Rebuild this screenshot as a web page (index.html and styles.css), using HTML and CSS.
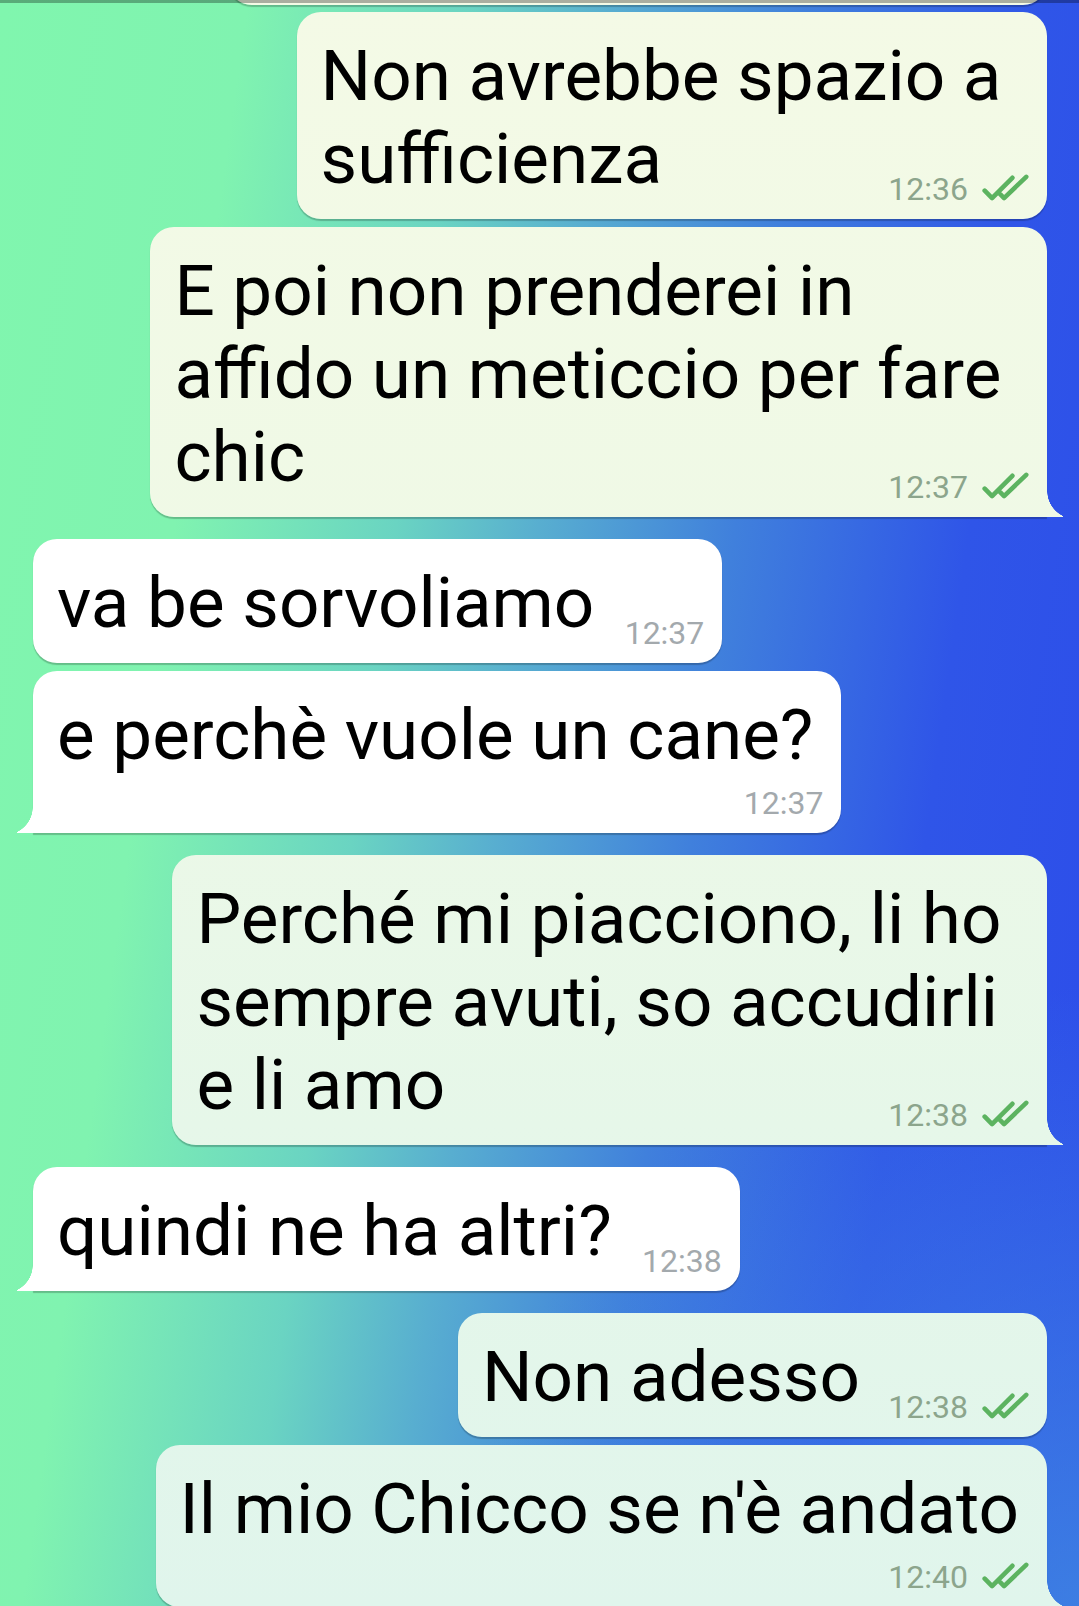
FILE: index.html
```html
<!DOCTYPE html>
<html lang="it">
<head>
    <meta charset="UTF-8">
    <meta name="viewport" content="width=device-width, initial-scale=1.0">
    <title>Chat</title>
    <link rel="stylesheet" href="styles.css">
</head>
<body>
    <div class="chat">
        <!-- bottom of the previous message, cut off by the toolbar -->
        <div class="bubble out cut"></div>

        <!-- sent -->
        <div class="group sent first">
            <div class="bubble out">
                <p class="text"><span>Non avrebbe spazio a&nbsp;<br>sufficienza</span><i class="spacer"></i></p>
                <div class="meta"><span class="time">12:36</span><svg class="ticks" viewBox="0 0 52 30"><path d="M4 19l8 8L34 5M21 23l4 4L49 4"/></svg></div>
            </div>
            <div class="bubble out tail">
                <p class="text"><span>E poi non prenderei in&nbsp;<br>affido un meticcio per fare&nbsp;<br>chic</span><i class="spacer"></i></p>
                <div class="meta"><span class="time">12:37</span><svg class="ticks" viewBox="0 0 52 30"><path d="M4 19l8 8L34 5M21 23l4 4L49 4"/></svg></div>
            </div>
        </div>

        <!-- received -->
        <div class="group recv">
            <div class="bubble in">
                <p class="text"><span>va be sorvoliamo</span><i class="spacer"></i></p>
                <div class="meta"><span class="time">12:37</span></div>
            </div>
            <div class="bubble in tail stacked">
                <p class="text"><span>e perchè vuole un cane?</span><i class="spacer"></i></p>
                <div class="meta"><span class="time">12:37</span></div>
            </div>
        </div>

        <div class="group sent">
            <div class="bubble out tail">
                <p class="text"><span>Perché mi piacciono, li ho&nbsp;<br>sempre avuti, so accudirli&nbsp;<br>e li amo</span><i class="spacer"></i></p>
                <div class="meta"><span class="time">12:38</span><svg class="ticks" viewBox="0 0 52 30"><path d="M4 19l8 8L34 5M21 23l4 4L49 4"/></svg></div>
            </div>
        </div>

        <div class="group recv">
            <div class="bubble in tail">
                <p class="text"><span>quindi ne ha altri?</span><i class="spacer"></i></p>
                <div class="meta"><span class="time">12:38</span></div>
            </div>
        </div>

        <div class="group sent">
            <div class="bubble out">
                <p class="text"><span>Non adesso</span><i class="spacer"></i></p>
                <div class="meta"><span class="time">12:38</span><svg class="ticks" viewBox="0 0 52 30"><path d="M4 19l8 8L34 5M21 23l4 4L49 4"/></svg></div>
            </div>
            <div class="bubble out tail stacked">
                <p class="text"><span>Il mio Chicco se n'è andato</span><i class="spacer"></i></p>
                <div class="meta"><span class="time">12:40</span><svg class="ticks" viewBox="0 0 52 30"><path d="M4 19l8 8L34 5M21 23l4 4L49 4"/></svg></div>
            </div>
        </div>
    </div>
</body>
</html>
```

FILE: styles.css
```css
/* Page + wallpaper */
body {
    margin: 0;
    height: 1606px;
    overflow: hidden;
    font-family: Roboto, "Noto Sans", sans-serif;
    color: #000;
    background:
        radial-gradient(circle at 100% 100%, rgba(66, 142, 224, 0.75) 0, rgba(66, 142, 224, 0) 620px),
        linear-gradient(98deg, #80f6ae 0%, #80f3b0 19%, #6ad4c2 36%, #58aed0 47%, #4080dc 62%, #2f55e8 80%, #2c4cea 100%);
}

.chat {
    position: relative;
    display: flex;
    flex-direction: column;
}

/* toolbar shadow over the top of the list */
.chat::before {
    content: "";
    position: absolute;
    top: 0;
    left: 0;
    right: 0;
    height: 3px;
    background: rgba(0, 0, 0, 0.3);
    z-index: 2;
}

.group {
    display: flex;
    flex-direction: column;
    gap: 8px;
    margin-top: 22px;
}

.group.first {
    margin-top: 7px;
}

.group.sent {
    align-items: flex-end;
    padding-right: 32px;
}

.group.recv {
    align-items: flex-start;
    padding-left: 33px;
}

/* Bubbles */
.bubble {
    position: relative;
    box-sizing: border-box;
    padding: 22px 28px 19px 24px;
    border-radius: 24px;
    box-shadow: 0 1.5px 1px rgba(0, 0, 0, 0.22);
}

.bubble.out {
    max-width: 960px;
    background: linear-gradient(180deg, #f4fae6 0%, #eff9e6 35%, #e6f7e9 70%, #e0f5ec 100%) fixed;
}

.bubble.in {
    max-width: 880px;
    background: #fff;
}

.bubble.cut {
    align-self: flex-end;
    width: 819px;
    height: 60px;
    margin: -55px 32px 0 0;
    padding: 0;
}

/* tail on the last bubble of a group */
.bubble.out.tail {
    border-bottom-right-radius: 0;
}

.bubble.in.tail {
    border-bottom-left-radius: 0;
}

.bubble.tail::after {
    content: "";
    position: absolute;
    bottom: 0;
    width: 17px;
    height: 26px;
    background: inherit;
}

.bubble.out.tail::after {
    right: -16px;
    -webkit-mask-image: radial-gradient(circle 28px at 29px 0, transparent 27.5px, #000 28px);
    mask-image: radial-gradient(circle 28px at 29px 0, transparent 27.5px, #000 28px);
}

.bubble.in.tail::after {
    left: -16px;
    -webkit-mask-image: radial-gradient(circle 28px at -12px 0, transparent 27.5px, #000 28px);
    mask-image: radial-gradient(circle 28px at -12px 0, transparent 27.5px, #000 28px);
}

/* Message text */
.text {
    margin: 0;
    font-size: 0;
    line-height: 0;
}

.text span {
    font-size: 71px;
    line-height: 83px;
    white-space: nowrap;
}

/* reserves room for the time on the last line */
.spacer {
    display: inline-block;
    height: 38px;
    width: 100px;
}

.bubble.out .spacer {
    width: 159px;
}

/* last line too long: the time gets a row of its own */
.bubble.stacked .spacer {
    display: block;
    width: auto;
}

/* Time + ticks */
.meta {
    position: absolute;
    right: 18px;
    bottom: 14px;
    display: flex;
    align-items: flex-end;
    gap: 13px;
}

.time {
    font-size: 32px;
    line-height: 32px;
}

.bubble.out .time {
    color: #8ca58c;
}

.bubble.in .time {
    color: #a3a9ad;
}

.ticks {
    width: 48px;
    height: 28px;
    margin-bottom: 4px;
    fill: none;
    stroke: #5cb360;
    stroke-width: 5;
    stroke-linecap: round;
    stroke-linejoin: round;
}
```
